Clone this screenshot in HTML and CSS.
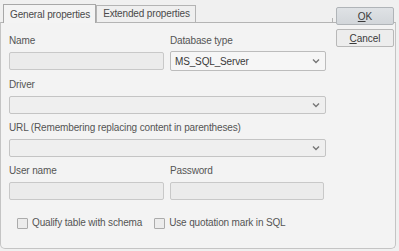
FILE: index.html
```html
<!DOCTYPE html>
<html lang="en">
<head>
  <meta charset="UTF-8">
  <title>Connection properties</title>
  <link rel="stylesheet" href="styles.css">
</head>
<body>
  <div class="window">
    <div class="tabbar">
      <div class="tab active">General properties</div>
      <div class="tab">Extended properties</div>
      <div class="tab-fill"></div>
    </div>

    <div class="panel">
      <div class="grid">
        <div class="field">
          <label>Name</label>
          <div class="input"></div>
        </div>
        <div class="field">
          <label>Database type</label>
          <div class="select db">
            <span>MS_SQL_Server</span>
            <svg width="8" height="6" viewBox="0 0 8 6"><path d="M1 1.5 L4 4.5 L7 1.5" fill="none" stroke="#777" stroke-width="1.4"/></svg>
          </div>
        </div>
        <div class="field wide">
          <label>Driver</label>
          <div class="select">
            <span></span>
            <svg width="8" height="6" viewBox="0 0 8 6"><path d="M1 1.5 L4 4.5 L7 1.5" fill="none" stroke="#777" stroke-width="1.4"/></svg>
          </div>
        </div>
        <div class="field wide">
          <label>URL (Remembering replacing content in parentheses)</label>
          <div class="select">
            <span></span>
            <svg width="8" height="6" viewBox="0 0 8 6"><path d="M1 1.5 L4 4.5 L7 1.5" fill="none" stroke="#777" stroke-width="1.4"/></svg>
          </div>
        </div>
        <div class="field">
          <label>User name</label>
          <div class="input"></div>
        </div>
        <div class="field">
          <label>Password</label>
          <div class="input short"></div>
        </div>
      </div>

      <div class="checks">
        <label class="check"><span class="box"></span>Qualify table with schema</label>
        <label class="check"><span class="box"></span>Use quotation mark in SQL</label>
      </div>
    </div>

    <div class="buttons">
      <button class="btn default"><u>O</u>K</button>
      <button class="btn"><u>C</u>ancel</button>
    </div>
  </div>
</body>
</html>
```

FILE: styles.css
```css
body {
  margin: 0;
  background: #f0f0f0;
  font-family: "Liberation Sans", Arial, sans-serif;
  font-size: 10px;
  letter-spacing: -0.15px;
  color: #555;
}
.window {
  position: relative;
  width: 396px;
  height: 249px;
}
.tabbar {
  display: flex;
  align-items: flex-end;
  width: 330px;
  height: 23px;
  padding-left: 3px;
}
.tab {
  height: 16px;
  line-height: 16px;
  padding: 0 5px 0 6px;
  border: 1px solid #b4b4b4;
  border-bottom: none;
  background: #efefef;
  color: #4a4a4a;
  margin-bottom: 1px;
}
.tab.active {
  height: 18px;
  line-height: 19px;
  margin-bottom: 0;
  background: #f4f4f4;
  border-color: #a8a8a8;
  position: relative;
  z-index: 1;
}
.tab-fill {
  flex: 1;
  height: 4px;
  border-bottom: 1px solid #b4b4b4;
  border-right: 1px solid #b4b4b4;
}
.panel {
  height: 213px;
  margin-top: -1px;
  padding: 12px 0 0 8px;
  border: 1px solid #c4c4c4;
  border-top: 1px solid #b4b4b4;
  border-radius: 0 0 5px 5px;
  background: #f3f3f3;
}
.grid {
  display: grid;
  grid-template-columns: 155px 156px;
  column-gap: 6px;
  row-gap: 8px;
}
.field {
  display: flex;
  flex-direction: column;
}
.field.wide {
  grid-column: 1 / 3;
}
.field label {
  height: 12px;
  line-height: 12px;
  margin-bottom: 5px;
}
.input {
  height: 16px;
  border: 1px solid #c8c8c8;
  border-radius: 2px;
  background: #ebebeb;
}
.input.short {
  margin-right: 2px;
}
.select {
  display: flex;
  align-items: center;
  justify-content: space-between;
  height: 16px;
  padding: 0 5px 0 4px;
  border: 1px solid #c4c4c4;
  border-radius: 2px;
  background: #efefef;
}
.select.db {
  height: 18px;
  margin-top: -1px;
  background: #f6f6f6;
  border-color: #bcbcbc;
  color: #3a3a3a;
}
.checks {
  display: flex;
  gap: 12px;
  margin-top: 17px;
  padding-left: 8px;
}
.check {
  display: flex;
  align-items: center;
  gap: 4px;
  line-height: 12px;
}
.box {
  width: 9px;
  height: 9px;
  border: 1px solid #ababab;
  border-radius: 1px;
  background: #ececec;
}
.buttons {
  position: absolute;
  top: 7px;
  left: 336px;
  display: flex;
  flex-direction: column;
  gap: 4px;
}
.btn {
  width: 58px;
  height: 18px;
  padding: 0;
  border: 1px solid #b8b8b8;
  border-radius: 2px;
  background: #ededed;
  font-family: "Liberation Sans", Arial, sans-serif;
  font-size: 10px;
  color: #3a3a3a;
}
.btn.default {
  background: linear-gradient(#dfe2e5, #d2d6da);
  border-color: #b0b4b8;
}
```
